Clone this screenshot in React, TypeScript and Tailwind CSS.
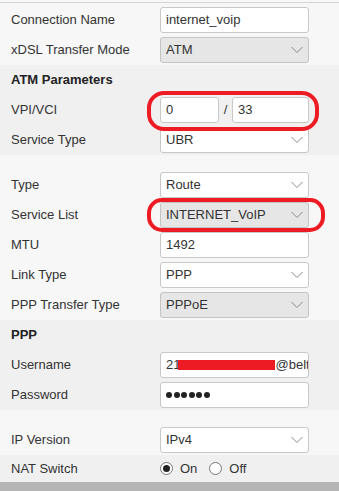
import React from "react";

const font = { fontFamily: '"Liberation Sans", Arial, sans-serif' };

function Chevron() {
  return (
    <svg width="12" height="7" viewBox="0 0 12 7" className="absolute right-[5px] top-1/2 -translate-y-1/2">
      <polyline points="0.5,0.5 6,6 11.5,0.5" fill="none" stroke="#8a8a8a" strokeWidth="1" />
    </svg>
  );
}

function Field({ children, disabled }: { children: React.ReactNode; disabled?: boolean }) {
  return (
    <div
      className={`relative flex h-[26px] w-[149px] items-center overflow-hidden whitespace-nowrap rounded-[3px] border pl-[5px] text-[13px] text-[#333] ${
        disabled ? "border-[#c4c4c4] bg-[#e6e6e6]" : "border-[#c8c8c8] bg-white"
      }`}
    >
      {children}
    </div>
  );
}

function Select({ value, disabled }: { value: string; disabled?: boolean }) {
  return (
    <Field disabled={disabled}>
      {value}
      <Chevron />
    </Field>
  );
}

function Row({ label, children }: { label: string; children: React.ReactNode }) {
  return (
    <div className="flex h-[30px] items-center">
      <div className="w-[160px] pl-[11px] text-[13px] text-[#333]">{label}</div>
      {children}
    </div>
  );
}

function Heading({ text }: { text: string }) {
  return (
    <div className="flex h-[30px] items-center pl-[11px] text-[13px] font-bold text-[#222]">{text}</div>
  );
}

function Radio({ checked }: { checked?: boolean }) {
  return (
    <span className="flex h-[13px] w-[13px] items-center justify-center rounded-full border border-[#777] bg-white">
      {checked && <span className="h-[7px] w-[7px] rounded-full bg-[#222]" />}
    </span>
  );
}

export default function App() {
  return (
    <div className="relative h-[491px] w-[339px] overflow-hidden bg-[#b5b5b5]" style={font}>
      <div className="h-[2px] bg-[#f7f7f7]" />
      <div className="h-px bg-[#d6d6d6]" />

      <div className="bg-[#f7f7f7] pt-[2px]">
        <Row label="Connection Name">
          <Field>internet_voip</Field>
        </Row>
        <Row label="xDSL Transfer Mode">
          <Select value="ATM" disabled />
        </Row>
      </div>

      <div className="bg-[#f0f0f0]">
        <Heading text="ATM Parameters" />
        <Row label="VPI/VCI">
          <div className="flex items-center">
            <div className="flex h-[26px] w-[59px] items-center rounded-[3px] border border-[#c8c8c8] bg-white pl-[5px] text-[13px] text-[#333]">
              0
            </div>
            <span className="w-[13px] text-center text-[13px] text-[#333]">/</span>
            <div className="flex h-[26px] w-[77px] items-center rounded-[3px] border border-[#c8c8c8] bg-white pl-[5px] text-[13px] text-[#333]">
              33
            </div>
          </div>
        </Row>
        <Row label="Service Type">
          <Select value="UBR" />
        </Row>
      </div>

      <div className="bg-[#f7f7f7] pt-[15px]">
        <Row label="Type">
          <Select value="Route" />
        </Row>
        <Row label="Service List">
          <Select value="INTERNET_VoIP" disabled />
        </Row>
        <Row label="MTU">
          <Field>1492</Field>
        </Row>
        <Row label="Link Type">
          <Select value="PPP" />
        </Row>
        <Row label="PPP Transfer Type">
          <Select value="PPPoE" disabled />
        </Row>
      </div>

      <div className="bg-[#f0f0f0]">
        <Heading text="PPP" />
        <Row label="Username">
          <Field>
            <span className="shrink-0">21</span>
            <span className="ml-[-2px] inline-block h-[10px] w-[97px] shrink-0 bg-[#ed1c24]" />
            <span className="shrink-0">@beltelecom.by</span>
          </Field>
        </Row>
        <Row label="Password">
          <Field>
            <span className="flex gap-[1.5px]">
              {[0, 1, 2, 3, 4, 5].map((i) => (
                <span key={i} className="h-[6px] w-[6px] rounded-full bg-[#222]" />
              ))}
            </span>
          </Field>
        </Row>
      </div>

      <div className="bg-[#f7f7f7] pt-[15px]">
        <Row label="IP Version">
          <Select value="IPv4" />
        </Row>
      </div>

      <div className="flex h-[27px] items-center bg-[#f0f0f0]">
        <div className="w-[160px] pl-[11px] text-[13px] text-[#333]">NAT Switch</div>
        <div className="flex items-center text-[13px] text-[#333]">
          <Radio checked />
          <span className="ml-[7px]">On</span>
          <span className="ml-[12px]">
            <Radio />
          </span>
          <span className="ml-[7px]">Off</span>
        </div>
      </div>

      <svg className="pointer-events-none absolute left-0 top-0" width="339" height="491">
        <rect x="149" y="93" width="168" height="36" rx="15" fill="none" stroke="#ed1c24" strokeWidth="4" />
        <rect x="149" y="200" width="174" height="30" rx="13" fill="none" stroke="#ed1c24" strokeWidth="4" />
      </svg>
    </div>
  );
}
